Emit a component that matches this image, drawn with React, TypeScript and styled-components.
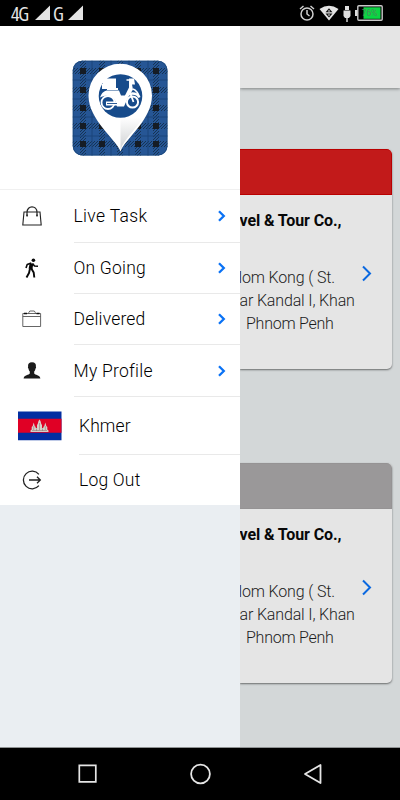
import React from "react";
import styled, { createGlobalStyle } from "styled-components";

const Global = createGlobalStyle`
  * { box-sizing: border-box; }
  body { margin: 0; background: #000; font-family: Roboto, "Noto Sans", sans-serif; }
  svg { display: block; flex: none; }
`;

const Screen = styled.div`
  width: 400px;
  height: 800px;
  display: flex;
  flex-direction: column;
  overflow: hidden;
  background: #000;
`;

const StatusBar = styled.header`
  height: 26px;
  display: flex;
  justify-content: space-between;
  align-items: center;
  padding: 0 17px 0 11px;
  color: #e4e4e4;
`;

const StatusGroup = styled.div<{ $gap: number }>`
  display: flex;
  align-items: center;
  gap: ${(p) => p.$gap}px;
`;

const Network = styled.span<{ $width: number }>`
  width: ${(p) => p.$width}px;
  padding-top: 1px;
  font: 20px/26px "Open Sans", sans-serif;
  font-stretch: 85%;
  letter-spacing: -1.2px;
  white-space: nowrap;
`;

const Body = styled.div`
  height: 722px;
  display: grid;
  grid-template-columns: 240px 1fr;
  border-bottom: 1px solid #8f9293;
`;

const Drawer = styled.aside`
  background: #eaeef2;
`;

const Brand = styled.div`
  height: 163px;
  padding: 34px 0 0 72px;
  background: #fff;
`;

const Menu = styled.nav`
  background: #fff;
  border-top: 1px solid #f0f0f0;
`;

const Row = styled.div<{ $height: number; $indent: number }>`
  height: ${(p) => p.$height}px;
  display: grid;
  grid-template-columns: ${(p) => p.$indent}px 1fr;
`;

const IconCell = styled.div<{ $left: number }>`
  display: flex;
  align-items: center;
  padding-left: ${(p) => p.$left}px;
`;

const Label = styled.div<{ $line: boolean; $spacing: number }>`
  display: flex;
  align-items: center;
  justify-content: space-between;
  padding: 1px 14px 0 0;
  border-bottom: ${(p) => (p.$line ? "1px solid #e9e9e9" : "0")};
  color: #000;
  font-size: 17.5px;
  font-weight: 350;
  letter-spacing: ${(p) => p.$spacing}px;
  white-space: nowrap;
`;

const Page = styled.main`
  background: #d3d7d8;
  overflow: hidden;
`;

const Toolbar = styled.div`
  height: 61.5px;
  background: #e5e5e5;
  box-shadow: 0 1px 3px rgba(0, 0, 0, 0.4);
`;

const Card = styled.section<{ $gap: number }>`
  width: 151.5px;
  height: 220px;
  margin-top: ${(p) => p.$gap}px;
  background: #e5e5e5;
  border-radius: 0 5px 5px 0;
  box-shadow: 0 1px 2px rgba(0, 0, 0, 0.5);
  overflow: hidden;
`;

const CardTop = styled.div<{ $color: string; $edge: string }>`
  height: 45.5px;
  background: ${(p) => p.$color};
  border: 1px solid ${(p) => p.$edge};
  border-left: 0;
  border-radius: 0 5px 0 0;
`;

const CardTitle = styled.h2`
  margin: 15px 0 0 -0.5px;
  font-size: 16px;
  line-height: 22px;
  font-weight: 700;
  letter-spacing: -0.1px;
  color: #080808;
  white-space: nowrap;
`;

const CardBody = styled.div`
  display: flex;
  justify-content: space-between;
  padding: 34px 20px 0 0;
`;

const Address = styled.div`
  font-size: 16px;
  line-height: 23px;
  font-weight: 300;
  color: #1c1c1c;
  white-space: nowrap;
`;

const Line = styled.div<{ $shift: number; $spacing: number }>`
  width: 112px;
  margin-left: ${(p) => p.$shift}px;
  letter-spacing: ${(p) => p.$spacing}px;
`;

const ArrowSlot = styled.div`
  margin-top: -1px;
`;

const NavBar = styled.footer`
  height: 52px;
  display: flex;
  justify-content: space-between;
  align-items: center;
  padding: 0 77px 0 78px;
`;

const Signal = () => (
  <svg width="16" height="16" viewBox="0 0 16 16"><path d="M15 .5V15H0Z" fill="#e4e4e4" /></svg>
);

const Alarm = () => (
  <svg width="16" height="17" viewBox="0 0 16 17" fill="none" stroke="#cfcfcf" strokeWidth="1.5">
    <circle cx="8" cy="9" r="6" /><path d="M1 4 4.5 1M11.5 1 15 4M8 5v4l2.5 2" />
  </svg>
);

const Wifi = () => (
  <svg width="20" height="16" viewBox="0 0 20 16">
    <path d="M.5 4Q10-2.5 19.5 4L10 15.5Z" fill="#e4e4e4" />
    <path d="m10 3.3 3.5 4h-7ZM6.5 8.5h7l-3.5 4Z" fill="#111" />
    <path d="M10 5v2M10 9v2" stroke="#ddd" />
  </svg>
);

const Usb = () => (
  <svg width="8" height="17" viewBox="0 0 8 17" fill="#e0e0e0">
    <path d="M2 1h4v4H2ZM.5 5.5h7V11L6 13H2L.5 11ZM3.3 13h1.4v4H3.3Z" />
  </svg>
);

const Battery = () => (
  <svg width="28" height="16" viewBox="0 0 28 16">
    <path d="M0 5h3v6H0Z" fill="#ddd" />
    <rect x="2.8" y=".8" width="24.4" height="14.4" rx="1" fill="#000" stroke="#c8c8c8" strokeWidth="1.4" />
    <path d="M8.5 2.3h17v11.5h-17Z" fill="#0bd543" />
    <text x="6.7" y="11" fontFamily="Roboto" fontSize="8.5" fill="#4a8a58" textLength="16" lengthAdjust="spacingAndGlyphs">76%</text>
  </svg>
);

const Logo = () => (
  <svg width="96" height="96" viewBox="0 0 96 96">
    <defs>
      <clipPath id="tile"><rect x=".8" y=".8" width="94.6" height="94.6" rx="9" /></clipPath>
      <pattern id="twill" width="3" height="3" patternUnits="userSpaceOnUse">
        <path d="M-1 3 3-1M1 4 4 1" stroke="#122943" strokeWidth=".8" />
      </pattern>
      <linearGradient id="pinShade" x1="0" y1="0" x2="0" y2="1">
        <stop offset=".1" stopColor="#fff" /><stop offset="1" stopColor="#cfd1d3" />
      </linearGradient>
    </defs>
    <g clipPath="url(#tile)">
      <path d="M0 0h96v96H0Z" fill="#265695" />
      {[8, 27, 45, 63, 81].map((p) => (
        <g key={p} fill="url(#twill)">
          <rect x={p} width="6" height="96" /><rect y={p} width="96" height="6" />
        </g>
      ))}
      <path d="M20 0v96M39 0v96M57 0v96M76 0v96M0 20h96M0 39h96M0 57h96M0 76h96" stroke="#1b457b" strokeWidth="1" />
      {[8, 27, 45, 63, 81].map((x) =>
        [8, 27, 45, 63, 81].map((y) => <rect key={`${x}-${y}`} x={x} y={y} width="6" height="6" fill="#151c25" />)
      )}
    </g>
    <rect x="1.2" y="1.2" width="93.8" height="93.8" rx="9" fill="none" stroke="#194679" strokeWidth=".8" />
    <path d="M48 92C43 79 17 59 17 36A31.5 31.5 0 0 1 80 36C80 59 54 79 48 92Z" fill="#0d2b50" opacity=".4" />
    <path d="M48.5 91.5C44 79 16.5 60 16.5 35.5A31.7 31.7 0 0 1 80 35.5C80 60 53 79 48.5 91.5Z" fill="#fff" />
    <path d="M48.5 58V89.5C52 79 66 68 73 54C66 58 58 59 48.5 58Z" fill="url(#pinShade)" />
    <circle cx="48.5" cy="36" r="21.8" fill="#174b8b" />
    <g fill="none" stroke="#fff">
      <circle cx="36" cy="42.5" r="6.5" strokeWidth="1.8" />
      <circle cx="60.5" cy="42" r="5.6" strokeWidth="2" />
      <path d="M54.5 20h3M61 29c3 1 6 5 6 8" strokeWidth="1.6" />
      <path d="M51.5 43c0-6 4-9.5 9-9.5 4 0 6 2 7 4" strokeWidth="2.4" />
      <path d="m57 30 4.5 12" strokeWidth="1.8" />
    </g>
    <path d="M31 18.5h13V28h2v2H35v-1h-5v-5h1ZM57 18.5h5l1 6h-3l1 5-5 8-4 9h-7l-2-6c-3-5-9-6-15-3 2-5 4-7 8-7h11l2 5h4l4-8Z" fill="#fff" />
    <path d="M34 41.5h13v4H34Z" fill="#fff" />
    <path d="M35 43.5h10" stroke="#174b8b" strokeWidth=".9" />
  </svg>
);

const Bag = () => (
  <svg width="20" height="20" viewBox="0 0 20 20" fill="none" stroke="#222">
    <path d="M2 6h16l1.2 13H.8Z" strokeWidth="1.1" />
    <path d="M5 10V6.5C5-1 15-1 15 6.5V10" strokeWidth="1.2" />
    <path d="M4.4 9.5h1.4M14.3 9.5h1.4" strokeWidth="2" />
  </svg>
);

const Walker = () => (
  <svg width="14" height="20" viewBox="0 0 14 20">
    <circle cx="8.4" cy="2.2" r="1.8" fill="#090909" />
    <g fill="none" stroke="#090909" strokeLinejoin="round">
      <path d="M6.5 5.5 5.5 11" strokeWidth="3.8" />
      <path d="M6.3 5 2.2 6.5 1 10M7.5 5.5l2 2.5 3.5.3" strokeWidth="1.6" />
      <path d="M5 10.5 4 15l-2.5 4.5M6.3 10.5l2.4 4 .6 5" strokeWidth="1.9" />
    </g>
  </svg>
);

const Briefcase = () => (
  <svg width="20" height="18" viewBox="0 0 20 18" fill="none" stroke="#555" strokeWidth=".9">
    <path d="M.8 3.5h17.8v13H.8ZM.8 6.5h17.8M6.8 3.5v-1l1-1.5h4.5l1 1.5v1" />
    <path d="M2 3.5h3M14.5 3.5h3" stroke="#111" strokeWidth="1.6" />
  </svg>
);

const Profile = () => (
  <svg width="18" height="17" viewBox="0 0 18 17" fill="#1b1b1b">
    <path d="M9 .3c3 0 4.3 1.8 3.9 4.4.4.7.1 1.6-.4 1.9-.2 1.6-.8 2.5-1.3 3v2c.8 1.4 5.7 1.5 6.2 4.8H.6c.5-3.3 5.4-3.4 6.2-4.8v-2c-.5-.5-1.1-1.4-1.3-3-.5-.3-.8-1.2-.4-1.9C4.7 2.1 6 .3 9 .3Z" />
  </svg>
);

const Flag = () => (
  <svg width="44" height="30" viewBox="0 0 44 30">
    <path d="M0 .5h43.5v28.7H0Z" fill="#032ea1" /><path d="M0 7.7h43.5v14H0Z" fill="#e00025" />
    <path d="M12.5 21v-1.5l1.2-1v-2.5l1-1 1-3.5 1 3.5 1 1v1h1.3v-3l.7-1 .8-3 1-1.5 1 1.5.8 3 .7 1v3h1.3v-1l1-1 1-3.5 1 3.5 1 1v2.5l1.2 1V21Z" fill="#d8cfc9" />
    <path d="M15.7 15v4M18.5 17.5v2.5M21.5 12v7M24.5 17.5v2.5M27.3 15v4M14 19.5h15" stroke="#8c7e79" strokeWidth=".6" />
  </svg>
);

const Exit = () => (
  <svg width="20" height="20" viewBox="0 0 20 20" fill="none" stroke="#202020" strokeWidth="1.3">
    <path d="M16.9 4.3A8.8 8.8 0 1 0 16.9 15.7M7 10h11M15 6.8 18.3 10 15 13.2" />
  </svg>
);

const MenuArrow = () => (
  <svg width="9" height="12" viewBox="0 0 9 12" fill="none" stroke="#0a72f5" strokeWidth="2.3">
    <path d="m2 1.2 4.8 4.8L2 10.8" />
  </svg>
);

const CardArrow = () => (
  <svg width="11" height="17" viewBox="0 0 11 17" fill="none" stroke="#0a68e0" strokeWidth="2">
    <path d="m2 1.5 7 7-7 7" />
  </svg>
);

const items = [
  { label: "Live Task", icon: <Bag />, left: 21.5, height: 52.5, indent: 73.5, arrow: true, line: true, spacing: 0.35 },
  { label: "On Going", icon: <Walker />, left: 24.5, height: 51.3, indent: 73.5, arrow: true, line: true, spacing: 0.2 },
  { label: "Delivered", icon: <Briefcase />, left: 21.5, height: 51.3, indent: 73.5, arrow: true, line: true, spacing: 0.2 },
  { label: "My Profile", icon: <Profile />, left: 22.5, height: 51.5, indent: 73.5, arrow: true, line: true, spacing: 0.25 },
  { label: "Khmer", icon: <Flag />, left: 17.5, height: 58, indent: 79, arrow: false, line: true, spacing: 0.1 },
  { label: "Log Out", icon: <Exit />, left: 21.5, height: 50.5, indent: 79, arrow: false, line: false, spacing: 0.2 },
];

const TaskCard = ({ gap, color, edge }: { gap: number; color: string; edge: string }) => (
  <Card $gap={gap}>
    <CardTop $color={color} $edge={edge} />
    <CardTitle>vel &amp; Tour Co.,</CardTitle>
    <CardBody>
      <Address>
        <Line $shift={-1.5} $spacing={-0.15}>lom Kong ( St.</Line>
        <Line $shift={-0.5} $spacing={-0.15}>ar Kandal I, Khan</Line>
        <Line $shift={6} $spacing={-0.25}>Phnom Penh</Line>
      </Address>
      <ArrowSlot><CardArrow /></ArrowSlot>
    </CardBody>
  </Card>
);

export default function App() {
  return (
    <Screen>
      <Global />
      <StatusBar>
        <StatusGroup $gap={2}>
          <Network $width={22}>4G</Network><Signal />
          <Network $width={13}>G</Network><Signal />
        </StatusGroup>
        <StatusGroup $gap={4}><Alarm /><Wifi /><Usb /><Battery /></StatusGroup>
      </StatusBar>
      <Body>
        <Drawer>
          <Brand><Logo /></Brand>
          <Menu>
            {items.map((item) => (
              <Row key={item.label} $height={item.height} $indent={item.indent}>
                <IconCell $left={item.left}>{item.icon}</IconCell>
                <Label $line={item.line} $spacing={item.spacing}>{item.label}{item.arrow && <MenuArrow />}</Label>
              </Row>
            ))}
          </Menu>
        </Drawer>
        <Page>
          <Toolbar />
          <TaskCard gap={61.5} color="#c21a1a" edge="#b90000" />
          <TaskCard gap={94} color="#9a9899" edge="#959394" />
        </Page>
      </Body>
      <NavBar>
        <svg width="20" height="20" viewBox="0 0 20 20"><path d="M1.3 1.3h16.5v16.5H1.3Z" fill="none" stroke="#e5e5e5" strokeWidth="1.7" /></svg>
        <svg width="22" height="22" viewBox="0 0 22 22"><circle cx="10.5" cy="11" r="9.4" fill="none" stroke="#e5e5e5" strokeWidth="1.8" /></svg>
        <svg width="20" height="22" viewBox="0 0 20 22"><path d="M17.5 2v18L2 11Z" fill="none" stroke="#e5e5e5" strokeWidth="1.8" strokeLinejoin="round" /></svg>
      </NavBar>
    </Screen>
  );
}
